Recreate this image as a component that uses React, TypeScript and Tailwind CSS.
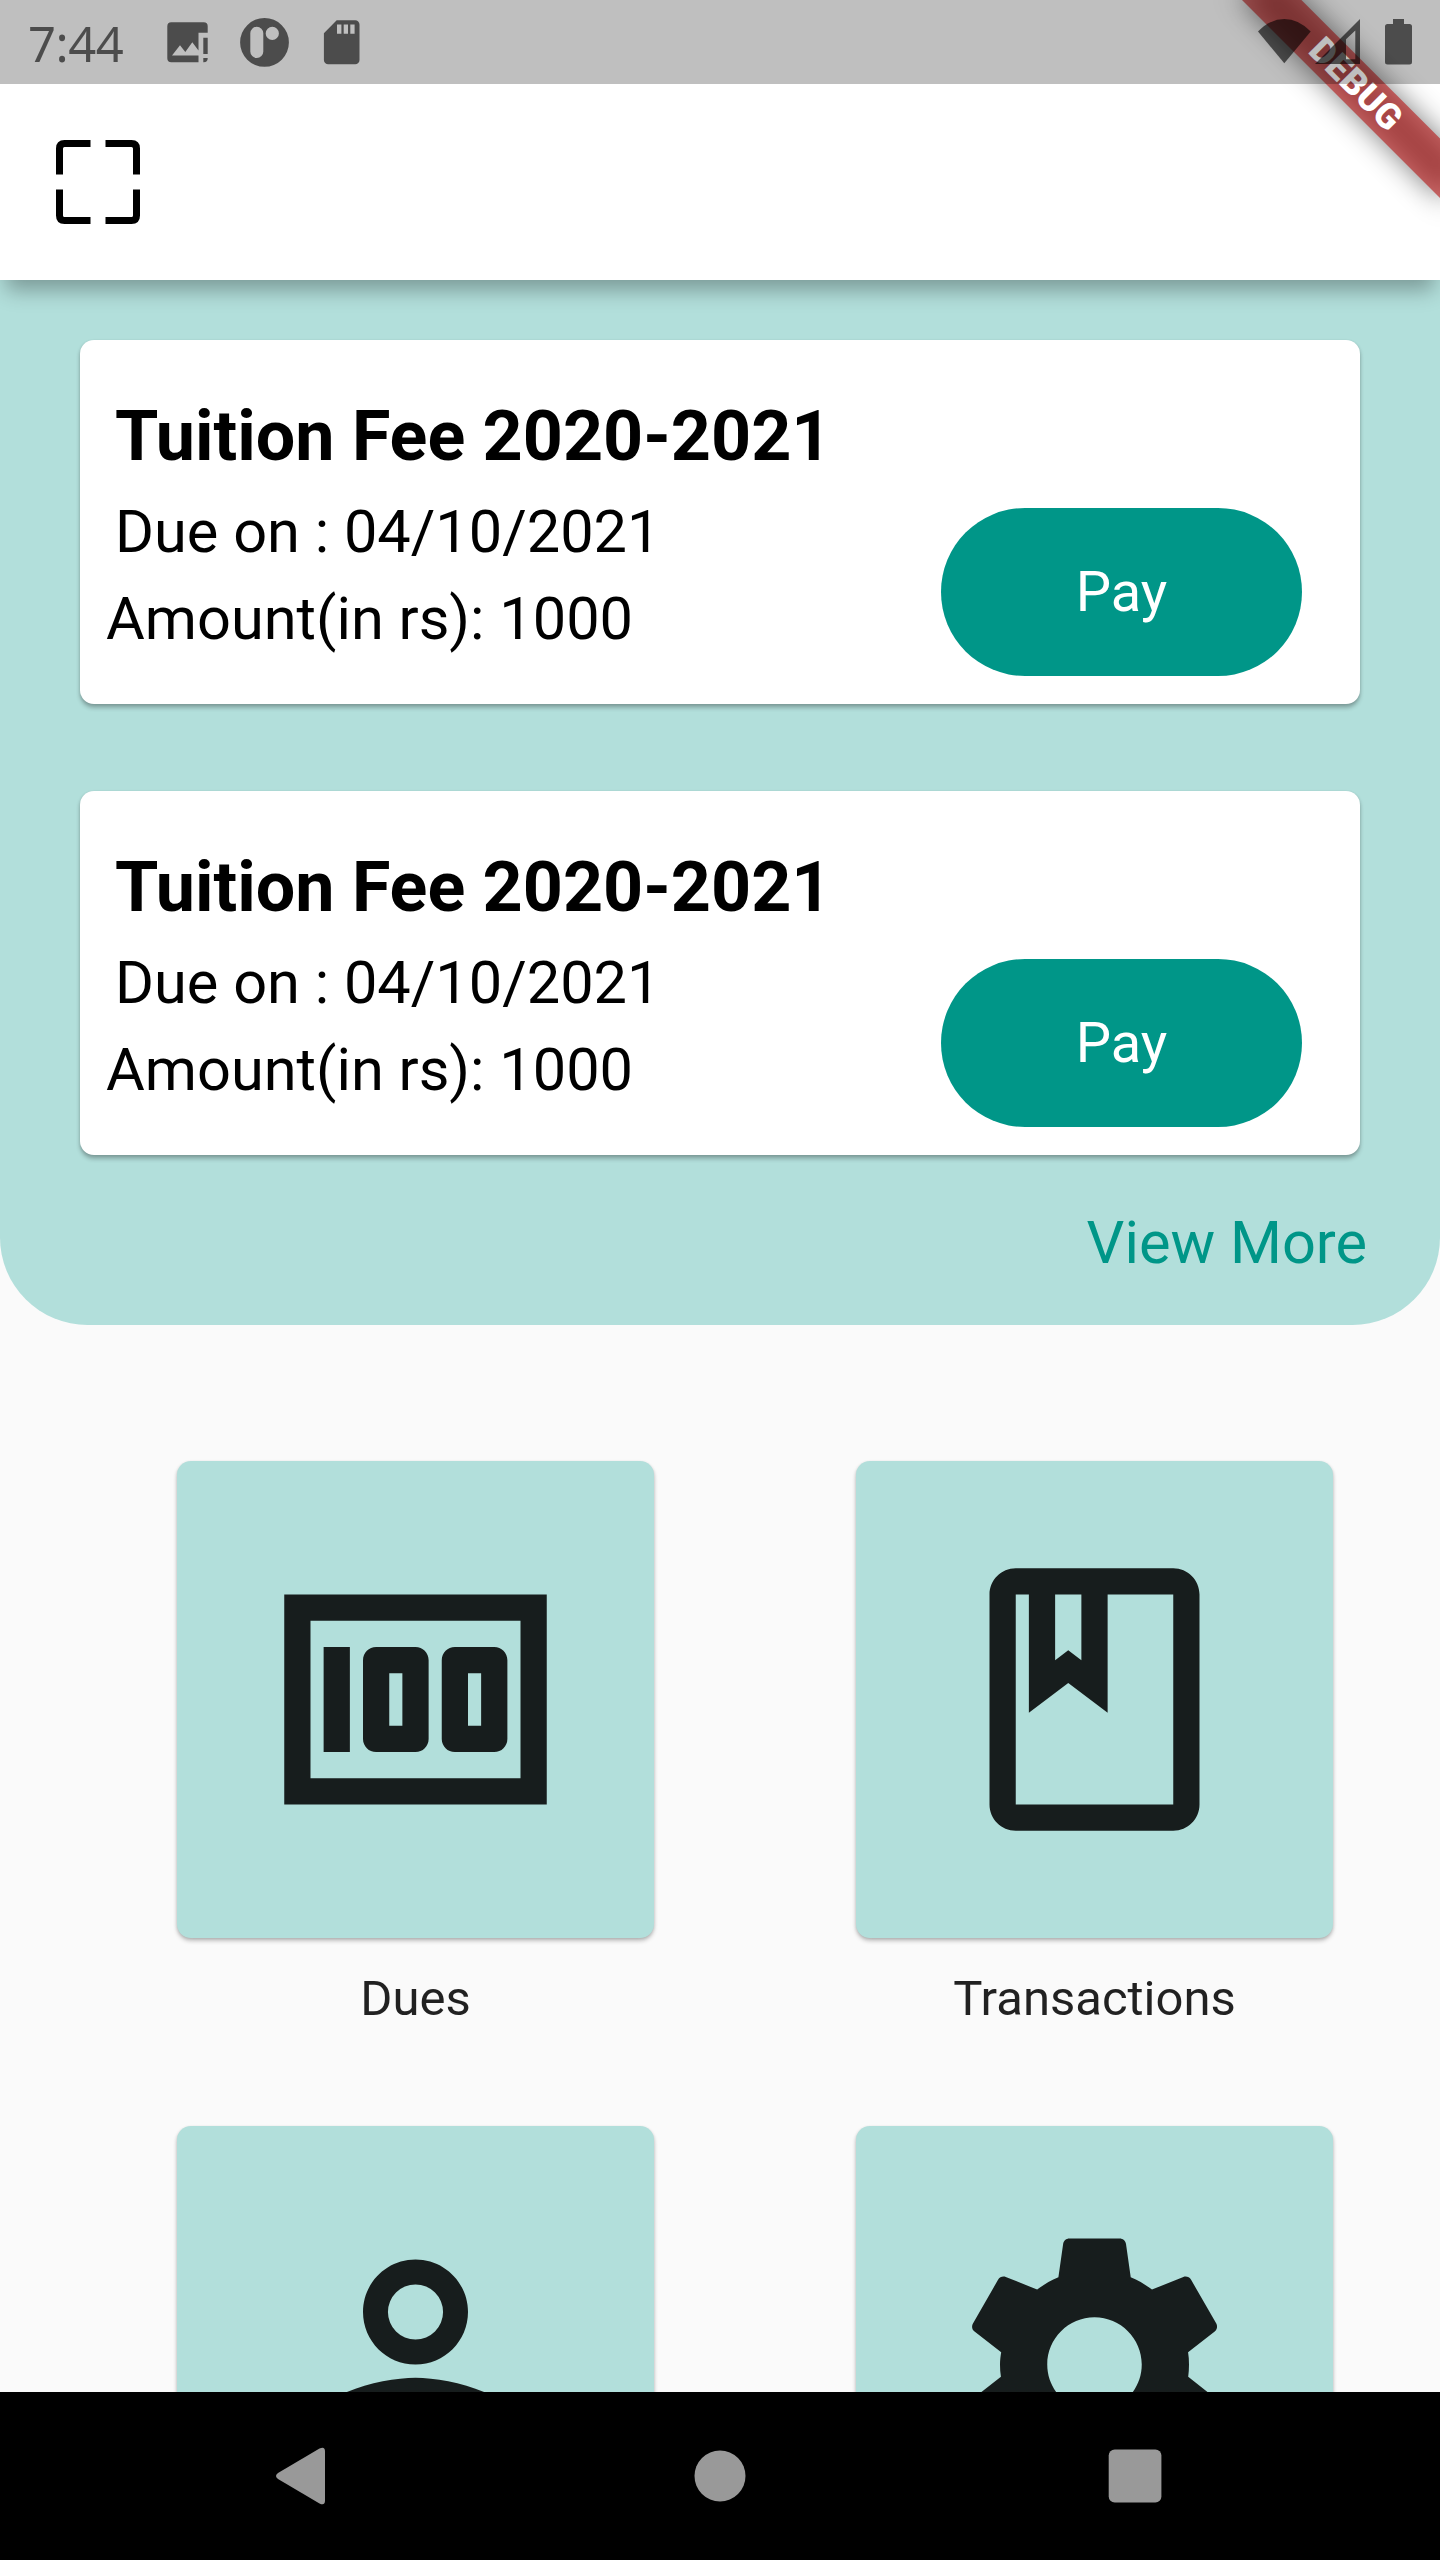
import type { ReactNode } from "react";

const ICONS = {
  money:
    "M5 8h2v8H5zM12 8H9c-.55 0-1 .45-1 1v6c0 .55.45 1 1 1h3c.55 0 1-.45 1-1V9c0-.55-.45-1-1-1zm-1 6h-1v-4h1v4zM18 8h-3c-.55 0-1 .45-1 1v6c0 .55.45 1 1 1h3c.55 0 1-.45 1-1V9c0-.55-.45-1-1-1zm-1 6h-1v-4h1v4zM2 4v16h20V4H2zm18 14H4V6h16v12z",
  book:
    "M18 2H6c-1.1 0-2 .9-2 2v16c0 1.1.9 2 2 2h12c1.1 0 2-.9 2-2V4c0-1.1-.9-2-2-2zM9 4h2v5l-1-.75L9 9V4zm9 16H6V4h1v9l3-2.25L13 13V4h5v16z",
  person:
    "M12 5.9a2.1 2.1 0 1 1 0 4.2 2.1 2.1 0 0 1 0-4.2m0 9c2.97 0 6.1 1.46 6.1 2.1v1.1H5.9V17c0-.64 3.13-2.1 6.1-2.1M12 4C9.79 4 8 5.79 8 8s1.79 4 4 4 4-1.79 4-4-1.79-4-4-4zm0 9c-2.67 0-8 1.34-8 4v3h16v-3c0-2.66-5.33-4-8-4z",
  settings:
    "M19.14 12.94c.04-.3.06-.61.06-.94 0-.32-.02-.64-.07-.94l2.03-1.58c.18-.14.23-.41.12-.61l-1.92-3.32c-.12-.22-.37-.29-.59-.22l-2.39.96c-.5-.38-1.03-.7-1.62-.94l-.36-2.54c-.04-.24-.24-.41-.48-.41h-3.84c-.24 0-.43.17-.47.41l-.36 2.54c-.59.24-1.13.57-1.62.94l-2.39-.96c-.22-.08-.47 0-.59.22L2.74 8.87c-.12.21-.08.47.12.61l2.03 1.58c-.05.3-.09.63-.09.94s.02.64.07.94l-2.03 1.58c-.18.14-.23.41-.12.61l1.92 3.32c.12.22.37.29.59.22l2.39-.96c.5.38 1.03.7 1.62.94l.36 2.54c.05.24.24.41.48.41h3.84c.24 0 .44-.17.47-.41l.36-2.54c.59-.24 1.13-.56 1.62-.94l2.39.96c.22.08.47 0 .59-.22l1.92-3.32c.12-.22.07-.47-.12-.61l-2.01-1.58zM12 15.6c-1.98 0-3.6-1.62-3.6-3.6s1.62-3.6 3.6-3.6 3.6 1.62 3.6 3.6-1.62 3.6-3.6 3.6z",
};

function StatusBar() {
  return (
    <div className="absolute inset-x-0 top-0 z-20 flex h-[84px] items-start bg-black/25 text-black/60">
      <span className="ml-[28px] mt-[10px] w-[139px] font-['Noto_Sans'] text-[49px] leading-[67px] tracking-[-0.5px]">
        7:44
      </span>
      <svg width="41" height="84" viewBox="167 0 41 84" fill="currentColor">
        <path
          fillRule="evenodd"
          d="M171.3 22.3H203.7a4 4 0 0 1 4 4V32.8H198.5V62.3H171.3a4 4 0 0 1-4-4V26.3a4 4 0 0 1 4-4ZM172 55.5H198.5V50.5L192.3 42.3 185.3 52 180 45.3Z"
        />
        <path d="M203.3 37.7h4.4V54h-4.4zM203.3 58h4.4v.3a4 4 0 0 1-4 4h-.4z" />
      </svg>
      <svg className="ml-8" width="50" height="84" viewBox="239.8 0 50 84" fill="currentColor">
        <path
          fillRule="evenodd"
          d="M264.3 18a24.4 24.4 0 1 0 0 48.8 24.4 24.4 0 1 0 0-48.8ZM256.6 26.8a6.5 6.5 0 0 1 6.5 6.5V51.5a6.5 6.5 0 0 1-13 0V33.3a6.5 6.5 0 0 1 6.5-6.5ZM272.1 26.8a6.6 6.6 0 1 1 0 13.2 6.6 6.6 0 1 1 0-13.2Z"
        />
      </svg>
      <svg className="ml-[33px]" width="38" height="84" viewBox="322.8 0 38 84" fill="currentColor">
        <path
          fillRule="evenodd"
          d="M336.5 20.2H355a4.3 4.3 0 0 1 4.3 4.3V60a4.3 4.3 0 0 1-4.3 4.3H328a4.3 4.3 0 0 1-4.3-4.3V33.3ZM336.8 24.5V33.7H341.2V24.5ZM343.5 24.5V33.7H347.8V24.5ZM350.1 24.5V33.7H354.4V24.5Z"
        />
      </svg>
      <svg className="ml-auto" width="182" height="84" viewBox="1258 0 182 84" fill="currentColor">
        <path d="M1284.3 63.3 1258 31.5Q1270 19 1284.3 19T1310.7 31.5Z" />
        <path fillRule="evenodd" d="M1315 64H1360V19ZM1346 59.3V39.3L1355.3 30.5V59.3Z" />
        <path d="M1393 19h11v5h5.5a2.5 2.5 0 0 1 2.5 2.5v35.6a2.5 2.5 0 0 1-2.5 2.5h-22a2.5 2.5 0 0 1-2.5-2.5V26.5a2.5 2.5 0 0 1 2.5-2.5h5.5z" />
      </svg>
    </div>
  );
}

function DebugBanner() {
  return (
    <div className="absolute right-0 top-0 z-10 size-0 rotate-45">
      <div className="absolute left-[-140px] top-[98px] h-[42px] w-[280px] bg-black/50 blur-[14px]" />
      <div className="absolute left-[-140px] top-[98px] flex h-[42px] w-[280px] items-center justify-center bg-[#b71c1c]/63 text-[35.7px] font-black leading-[42px] text-white">
        DEBUG
      </div>
    </div>
  );
}

function AppBar() {
  return (
    <header className="relative z-[5] flex h-[280px] shrink-0 items-start bg-white pl-14 pt-[140px] shadow-[0_16px_20px_-6px_rgba(0,0,0,0.31)]">
      <svg width="84" height="84" viewBox="0 0 84 84" fill="none" stroke="#000" strokeWidth="7">
        <path d="M3.5 34.5V8.5q0-5 5-5H34.5M49.5 3.5H75.5q5 0 5 5V34.5M80.5 49.5V75.5q0 5-5 5H49.5M34.5 80.5H8.5q-5 0-5-5V49.5" />
      </svg>
    </header>
  );
}

function FeeCard() {
  return (
    <article className="flex h-[364px] justify-between rounded-[14px] bg-white pr-[58px] text-black shadow-[0_3.5px_4px_rgba(0,0,0,0.24),0_1px_3px_rgba(0,0,0,0.12)]">
      <div className="pt-[55px] text-[59.5px] leading-[70px]">
        <h2 className="pl-[35px] text-[70px] font-bold leading-[82px]">Tuition Fee 2020-2021</h2>
        <p className="mt-[20px] pl-[35px]">Due on : 04/10/2021</p>
        <p className="mt-[17px] pl-[26px]">Amount(in rs): 1000</p>
      </div>
      <button className="mt-[168px] h-[168px] w-[361px] rounded-full bg-[#009688] text-[56px] text-white">
        Pay
      </button>
    </article>
  );
}

function Tile({ icon, children }: { icon: string; children?: ReactNode }) {
  return (
    <div className="flex w-[477px] flex-col items-center">
      <div className="flex size-[477px] items-center justify-center rounded-[14px] bg-[#b2dfdb] shadow-[0_3px_4px_rgba(0,0,0,0.22),0_1px_3px_rgba(0,0,0,0.12)]">
        <svg width="315" height="315" viewBox="0 0 24 24" className="fill-black/87">
          <path d={icon} />
        </svg>
      </div>
      {children && (
        <span className="mt-[32px] text-[49px] leading-[58px] text-black/87">{children}</span>
      )}
    </div>
  );
}

function NavBar() {
  return (
    <nav className="relative z-10 h-[168px] shrink-0 bg-black">
      <svg width="1440" height="168" viewBox="0 0 1440 168" fill="#999">
        <path d="M319.5 56.6Q325 54 325 59.5V108.5Q325 114 319.5 111.4L278 87Q274 84 278 81Z" />
        <circle cx="720" cy="84" r="25.5" />
        <rect x="1108.7" y="57.5" width="52.7" height="53" rx="6" />
      </svg>
    </nav>
  );
}

export default function App() {
  return (
    <div className="relative flex h-[2560px] w-[1440px] flex-col overflow-hidden bg-[#fafafa] font-[Roboto,sans-serif]">
      <StatusBar />
      <DebugBanner />
      <AppBar />
      <main className="min-h-0 flex-1 overflow-hidden">
        <section className="flex h-[1045px] flex-col rounded-b-[87.5px] bg-[#b2dfdb] px-20 pt-[60px]">
          <FeeCard />
          <div className="h-[87px] shrink-0" />
          <FeeCard />
          <a className="mr-[-7px] mt-[53px] self-end text-[59.5px] leading-[70px] text-[#009688]">
            View More
          </a>
        </section>
        <section className="grid grid-cols-[477px_477px] gap-x-[202px] gap-y-[98px] pl-[177px] pt-[136px]">
          <Tile icon={ICONS.money}>Dues</Tile>
          <Tile icon={ICONS.book}>Transactions</Tile>
          <Tile icon={ICONS.person} />
          <Tile icon={ICONS.settings} />
        </section>
      </main>
      <NavBar />
    </div>
  );
}
